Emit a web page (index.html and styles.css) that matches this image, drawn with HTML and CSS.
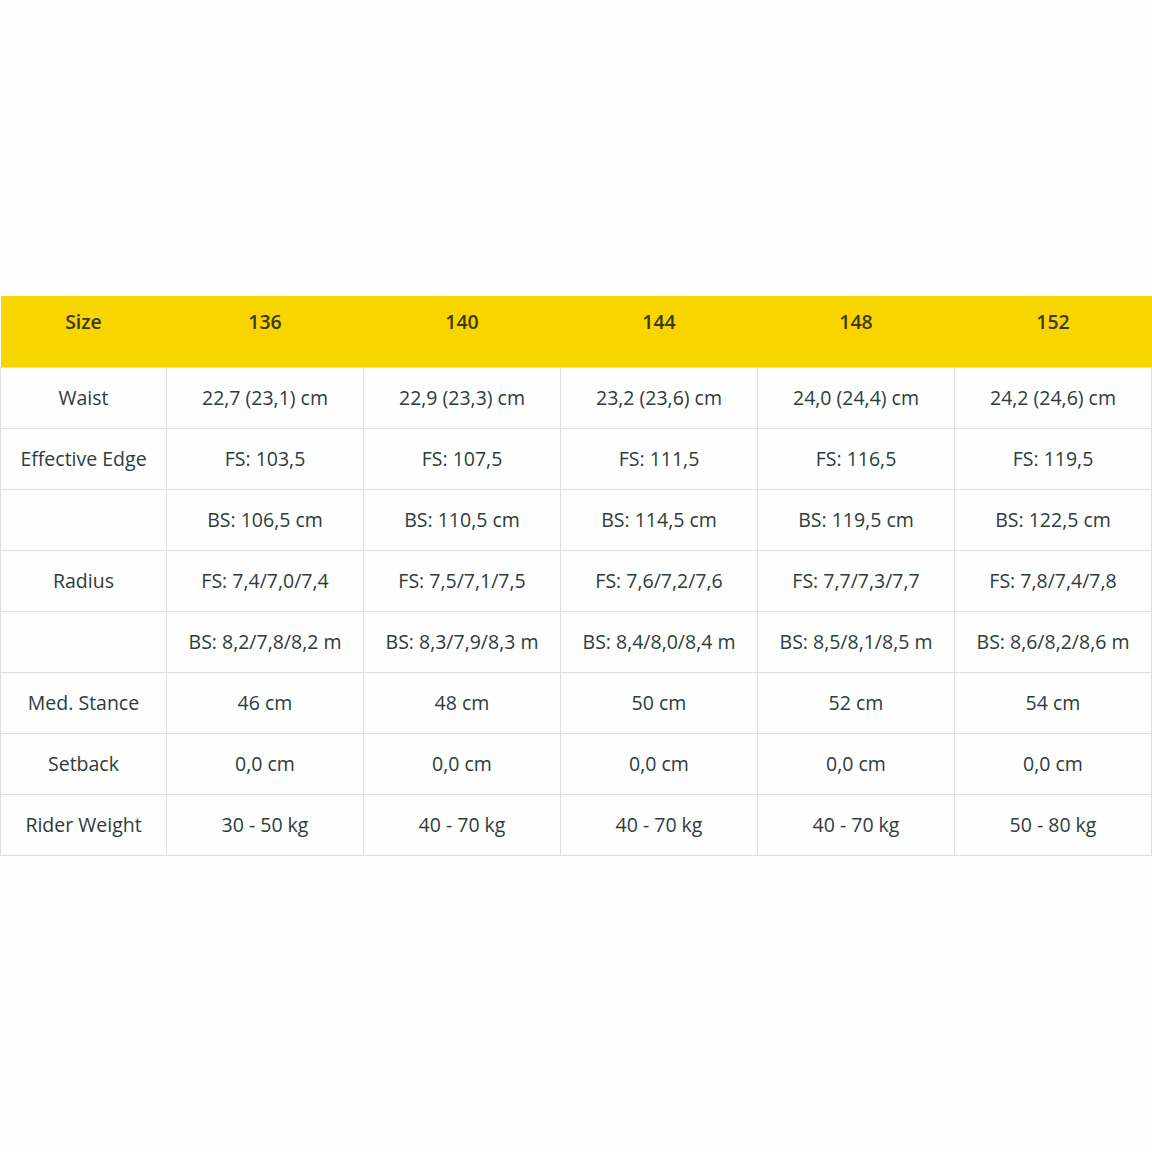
FILE: index.html
```html
<!DOCTYPE html>
<html>
<head>
<meta charset="utf-8">
<link rel="stylesheet" href="styles.css">
</head>
<body>
<div class="page">
<table class="specs">
  <colgroup>
    <col class="c-label"><col class="c-val"><col class="c-val"><col class="c-val"><col class="c-val"><col class="c-val">
  </colgroup>
  <thead>
    <tr><th>Size</th><th>136</th><th>140</th><th>144</th><th>148</th><th>152</th></tr>
  </thead>
  <tbody>
    <tr><td>Waist</td><td>22,7 (23,1) cm</td><td>22,9 (23,3) cm</td><td>23,2 (23,6) cm</td><td>24,0 (24,4) cm</td><td>24,2 (24,6) cm</td></tr>
    <tr><td>Effective Edge</td><td>FS: 103,5</td><td>FS: 107,5</td><td>FS: 111,5</td><td>FS: 116,5</td><td>FS: 119,5</td></tr>
    <tr><td></td><td>BS: 106,5 cm</td><td>BS: 110,5 cm</td><td>BS: 114,5 cm</td><td>BS: 119,5 cm</td><td>BS: 122,5 cm</td></tr>
    <tr><td>Radius</td><td>FS: 7,4/7,0/7,4</td><td>FS: 7,5/7,1/7,5</td><td>FS: 7,6/7,2/7,6</td><td>FS: 7,7/7,3/7,7</td><td>FS: 7,8/7,4/7,8</td></tr>
    <tr><td></td><td>BS: 8,2/7,8/8,2 m</td><td>BS: 8,3/7,9/8,3 m</td><td>BS: 8,4/8,0/8,4 m</td><td>BS: 8,5/8,1/8,5 m</td><td>BS: 8,6/8,2/8,6 m</td></tr>
    <tr><td>Med. Stance</td><td>46 cm</td><td>48 cm</td><td>50 cm</td><td>52 cm</td><td>54 cm</td></tr>
    <tr><td>Setback</td><td>0,0 cm</td><td>0,0 cm</td><td>0,0 cm</td><td>0,0 cm</td><td>0,0 cm</td></tr>
    <tr><td>Rider Weight</td><td>30 - 50 kg</td><td>40 - 70 kg</td><td>40 - 70 kg</td><td>40 - 70 kg</td><td>50 - 80 kg</td></tr>
  </tbody>
</table>
</div>
</body>
</html>
```
FILE: styles.css
```css
html, body {
  margin: 0;
  padding: 0;
  background: #fefefe;
}
.page {
  padding-top: 296px;
}
.specs {
  border-collapse: collapse;
  table-layout: fixed;
  width: 1152px;
  font-family: "Open Sans", "Liberation Sans", sans-serif;
  font-size: 19.5px;
  color: #2e3c3c;
}
.c-label { width: 166px; }
.c-val { width: 197px; }
.specs th {
  background: #f9d500;
  color: #3b3a14;
  font-weight: 600;
  height: 71px;
  box-sizing: border-box;
  padding: 12px 0 31px;
  line-height: 28px;
  text-align: center;
  border: none;
}
.specs td {
  height: 61px;
  box-sizing: border-box;
  padding: 0;
  text-align: center;
  vertical-align: middle;
  line-height: 28px;
  border: 1px solid #e0e0e0;
}
```
